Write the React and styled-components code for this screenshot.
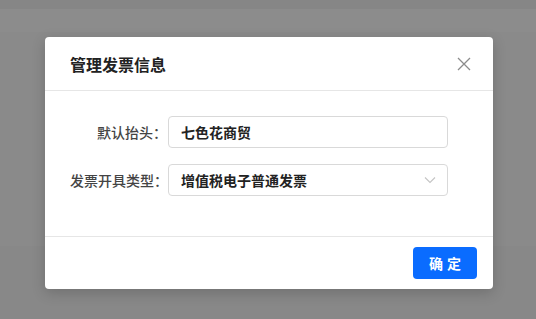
import React from 'react';
import styled, { createGlobalStyle } from 'styled-components';

const GlobalStyle = createGlobalStyle`
  html, body {
    margin: 0;
    padding: 0;
    background: #8a8a8a;
  }
  body {
    font-family: "Noto Sans CJK SC", "Noto Sans", sans-serif;
  }
`;

const Page = styled.div`
  position: relative;
  width: 536px;
  height: 319px;
  overflow: hidden;
  background: #8a8a8a;
  display: flex;
  flex-direction: column;
`;

const TopStrip = styled.div`
  height: 9px;
  background: #868686;
`;

const SubBar = styled.div`
  height: 23px;
  background: #8c8c8c;
`;

const Content = styled.div`
  height: 214px;
  background: #8a8a8a;
`;

const Foot = styled.div`
  flex: 1;
  background: #888888;
`;

const Overlay = styled.div`
  position: absolute;
  inset: 0;
  display: flex;
  justify-content: center;
  align-items: flex-start;
  padding: 37px 0 0 2px;
`;

const Dialog = styled.div`
  width: 448px;
  height: 252px;
  background: #fff;
  border-radius: 4px;
  box-shadow: 0 4px 14px rgba(0, 0, 0, 0.18);
  display: flex;
  flex-direction: column;
`;

const Header = styled.div`
  height: 54px;
  box-sizing: border-box;
  padding: 0 22px 0 25px;
  display: flex;
  align-items: center;
  justify-content: space-between;
  border-bottom: 1px solid #e6e6e6;
`;

const Title = styled.h3`
  margin: 0;
  font-size: 16px;
  font-weight: 700;
  color: #222;
`;

const Close = styled.button`
  border: none;
  background: none;
  padding: 0;
  width: 14px;
  height: 14px;
  cursor: pointer;
  display: flex;
`;

const Body = styled.div`
  flex: 1;
  padding: 25px 0 0 25px;
  display: flex;
  flex-direction: column;
  gap: 16px;
`;

const Row = styled.div`
  display: flex;
  align-items: center;
  gap: 1px;
`;

const Label = styled.label`
  width: 97px;
  flex-shrink: 0;
  white-space: nowrap;
  text-align: right;
  font-size: 14px;
  font-weight: 500;
  color: #444;
`;

const Field = styled.div`
  box-sizing: border-box;
  width: 280px;
  height: 32px;
  border: 1px solid #d9d9d9;
  border-radius: 4px;
  padding: 0 11px 0 12px;
  display: flex;
  align-items: center;
  justify-content: space-between;
  font-size: 14px;
  font-weight: 700;
  color: #222;
`;

const Footer = styled.div`
  height: 53px;
  box-sizing: border-box;
  border-top: 1px solid #e6e6e6;
  display: flex;
  justify-content: flex-end;
  align-items: flex-start;
  padding: 10px 16px 0 0;
`;

const Button = styled.button`
  width: 64px;
  height: 32px;
  border: none;
  border-radius: 4px;
  background: #0a6cff;
  color: #fff;
  font-family: inherit;
  font-size: 14px;
  font-weight: 700;
  letter-spacing: 4px;
  text-indent: 4px;
  cursor: pointer;
`;

export default function App() {
  return (
    <>
      <GlobalStyle />
      <Page>
        <TopStrip />
        <SubBar />
        <Content />
        <Foot />
        <Overlay>
          <Dialog>
            <Header>
              <Title>管理发票信息</Title>
              <Close aria-label="关闭">
                <svg width="14" height="14" viewBox="0 0 14 14">
                  <path d="M1 1L13 13M13 1L1 13" stroke="#8c8c8c" strokeWidth="1.3" fill="none" />
                </svg>
              </Close>
            </Header>
            <Body>
              <Row>
                <Label>默认抬头：</Label>
                <Field>七色花商贸</Field>
              </Row>
              <Row>
                <Label>发票开具类型：</Label>
                <Field>
                  增值税电子普通发票
                  <svg width="12" height="8" viewBox="0 0 12 8">
                    <path d="M1 1.5L6 6.5L11 1.5" stroke="#c4c4c4" strokeWidth="1.1" fill="none" />
                  </svg>
                </Field>
              </Row>
            </Body>
            <Footer>
              <Button>确定</Button>
            </Footer>
          </Dialog>
        </Overlay>
      </Page>
    </>
  );
}
